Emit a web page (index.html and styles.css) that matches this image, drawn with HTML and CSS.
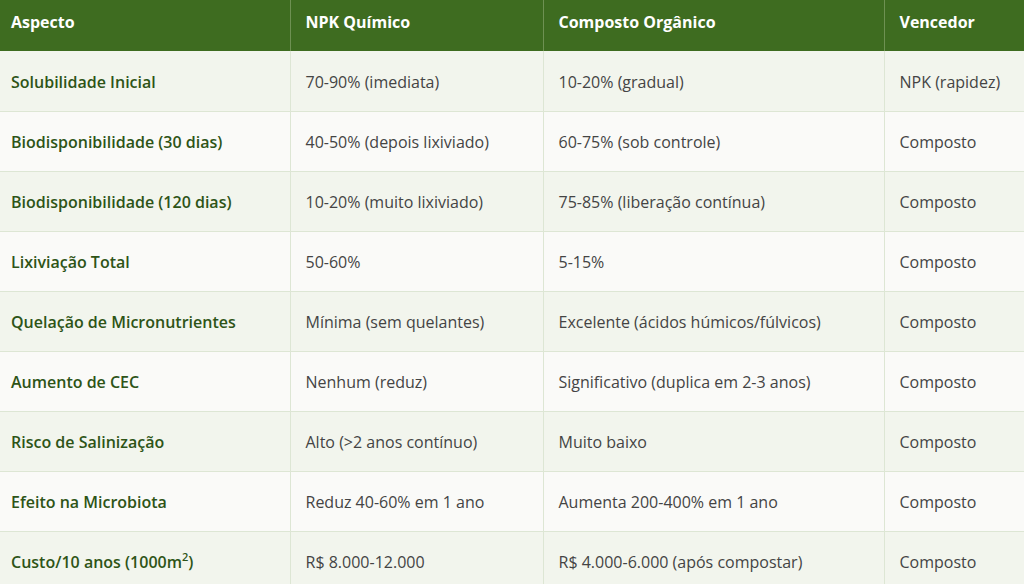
FILE: index.html
```html
<!DOCTYPE html>
<html lang="pt">
<head>
<meta charset="utf-8">
<title>Comparação NPK x Composto</title>
<link rel="stylesheet" href="styles.css">
</head>
<body>
<table class="cmp">
  <colgroup>
    <col class="c1"><col class="c2"><col class="c3"><col class="c4">
  </colgroup>
  <thead>
    <tr><th>Aspecto</th><th>NPK Químico</th><th>Composto Orgânico</th><th>Vencedor</th></tr>
  </thead>
  <tbody>
    <tr><td>Solubilidade Inicial</td><td>70-90% (imediata)</td><td>10-20% (gradual)</td><td>NPK (rapidez)</td></tr>
    <tr><td>Biodisponibilidade (30 dias)</td><td>40-50% (depois lixiviado)</td><td>60-75% (sob controle)</td><td>Composto</td></tr>
    <tr><td>Biodisponibilidade (120 dias)</td><td>10-20% (muito lixiviado)</td><td>75-85% (liberação contínua)</td><td>Composto</td></tr>
    <tr><td>Lixiviação Total</td><td>50-60%</td><td>5-15%</td><td>Composto</td></tr>
    <tr><td>Quelação de Micronutrientes</td><td>Mínima (sem quelantes)</td><td>Excelente (ácidos húmicos/fúlvicos)</td><td>Composto</td></tr>
    <tr><td>Aumento de CEC</td><td>Nenhum (reduz)</td><td>Significativo (duplica em 2-3 anos)</td><td>Composto</td></tr>
    <tr><td>Risco de Salinização</td><td>Alto (&gt;2 anos contínuo)</td><td>Muito baixo</td><td>Composto</td></tr>
    <tr><td>Efeito na Microbiota</td><td>Reduz 40-60% em 1 ano</td><td>Aumenta 200-400% em 1 ano</td><td>Composto</td></tr>
    <tr><td>Custo/10 anos (1000m<sup>2</sup>)</td><td>R$ 8.000-12.000</td><td>R$ 4.000-6.000 (após compostar)</td><td>Composto</td></tr>
  </tbody>
</table>
</body>
</html>
```
FILE: styles.css
```css
html, body {
  margin: 0;
  padding: 0;
  background: #ffffff;
}
body {
  font-family: "Open Sans", "Noto Sans", "DejaVu Sans", sans-serif;
  font-size: 16px;
  overflow: hidden;
}
.cmp {
  width: 1028px;
  margin-left: -4px;
  border-collapse: collapse;
  table-layout: fixed;
}
.c1 { width: 294px; }
.c2 { width: 253px; }
.c3 { width: 341px; }
.c4 { width: 140px; }
.cmp th {
  background: #3e6c20;
  color: #ffffff;
  font-weight: 700;
  text-align: left;
  height: 51px;
  padding: 0 15px 7px;
  border-right: 1px solid #6e9152;
  line-height: 24px;
  vertical-align: middle;
  box-sizing: border-box;
}
.cmp td {
  height: 60px;
  padding: 2px 15px 0;
  color: #444444;
  line-height: 24px;
  vertical-align: middle;
  border-bottom: 1px solid #dde6d4;
  border-right: 1px solid #dde6d4;
  box-sizing: border-box;
}
.cmp th:last-child,
.cmp td:last-child {
  border-right: none;
}
.cmp tbody tr:nth-child(odd) td {
  background: #f2f5ed;
}
.cmp tbody tr:nth-child(even) td {
  background: #fafaf8;
}
.cmp td:first-child {
  color: #2e5417;
  font-weight: 600;
}
.cmp sup {
  font-size: 11px;
  line-height: 0;
  vertical-align: 7px;
}
```
